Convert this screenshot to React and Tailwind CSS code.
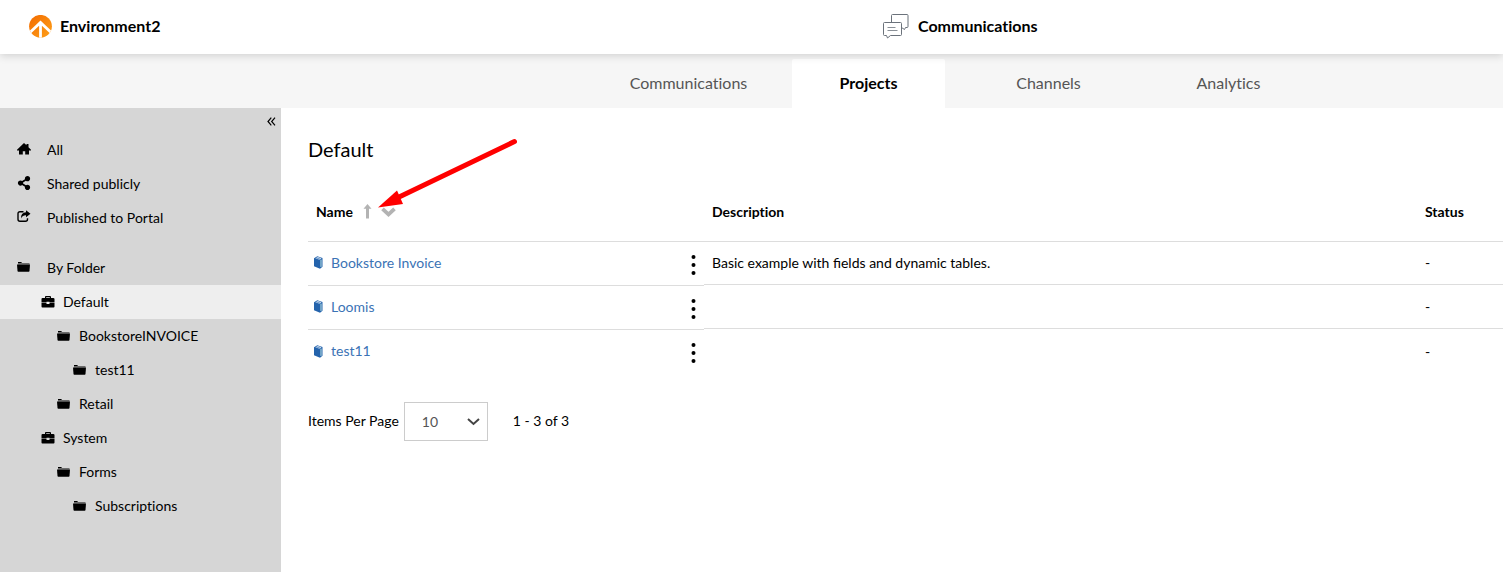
import { useState } from "react";
import { FaShareAlt } from "react-icons/fa";

function HomeIcon() {
    return (
        <svg width="14" height="12" viewBox="0 0 14 12" fill="black" aria-hidden="true">
            <path d="M7 0L9.500 2.300V1h2v3.200L14 6.800v.7h-2V11.500H8.200V8.200H5.800V11.500H2V7.500H0V6.800z" />
        </svg>
    );
}

function ShareIcon() {
    return (
        <svg width="14" height="13" viewBox="0 0 14 13" aria-hidden="true">
            <path d="M6.500 1.700H3Q1 1.700 1 3.700V9.300q0 2 2 2h5.500q2 0 2-2V8.300" fill="none" stroke="black" strokeWidth="1.400" />
            <path d="M9 0.300L13.500 3.800 9 7.300V5.300Q5.800 5.100 4 8.500 3.800 2.600 9 2.300z" />
        </svg>
    );
}

function FolderIcon() {
    return (
        <svg width="13" height="10" viewBox="0 0 13 10" fill="black" aria-hidden="true">
            <path d="M1 1h11.500v1.500H1z" opacity="0.5" />
            <path d="M1 0h3.400l.4 1H1z" />
            <path d="M0 2.400h13L12.500 9.100q-.1.700-.7.700H1.200q-.6 0-.7-.7z" />
        </svg>
    );
}

function CaseIcon() {
    return (
        <svg width="14" height="12" viewBox="0 0 14 12" fill="black" aria-hidden="true">
            <path fillRule="evenodd" d="M4 2V1q0-.9.9-.9h4.200q.9 0 .9.9v1h2.200Q13.500 2 13.500 3v3.500H8.500v-.7h-3v.7H.5V3q0-1 1-1zM5.200 2h3.600v-.8H5.200z" />
            <path d="M.5 7h5v.9h3V7h5v3.600q0 .9-.9.900H1.400q-.9 0-.9-.9z" />
        </svg>
    );
}

function BookIcon() {
    return (
        <svg width="9" height="13" viewBox="0 0 9 13" aria-hidden="true">
            <path d="M0 2.200L3.300.3 8.500 2V10.700L6 12.700 0 10.200z" fill="#2463ac" />
            <path d="M1.300 2.300L3.600 1l3.900 1.300L5.500 3.800z" fill="#dce9f6" />
            <path d="M2.200 1.800L6.300 3.200" stroke="#2463ac" strokeWidth="0.600" />
            <path d="M7 3.600v7.300" stroke="#bfe6e4" strokeWidth="1" />
        </svg>
    );
}

function LogoIcon() {
    return (
        <svg width="23" height="23" viewBox="0 0 23 23" aria-hidden="true">
            <defs>
                <linearGradient id="logo-fill" x1="0" y1="0" x2="1" y2="1">
                    <stop offset="0" stopColor="#f26a00" />
                    <stop offset="1" stopColor="#ffa21a" />
                </linearGradient>
                <clipPath id="logo-clip">
                    <circle cx="11.500" cy="11.300" r="11.400" />
                </clipPath>
            </defs>
            <g clipPath="url(#logo-clip)">
                <rect width="23" height="23" fill="url(#logo-fill)" />
                <path d="M1.200 17.200L11.500 7.500l10.300 9.700M11.500 8v15" fill="none" stroke="white" strokeWidth="2.800" />
            </g>
        </svg>
    );
}

function ChatIcon() {
    return (
        <svg width="26" height="25" viewBox="0 0 26 25" fill="none" stroke="#6b727b" strokeWidth="1" aria-hidden="true">
            <path d="M8.500 8V1.500q0-1 1-1H24q1 0 1 1V12.500q0 1-1 1H22.500L21.500 15.500L18.500 13.500" />
            <path d="M1.500 8.500H17.500q1 0 1 1V20.500q0 1-1 1H7.500L4.500 24L3.500 21.500H1.500q-1 0-1-1V9.500q0-1 1-1z" />
            <path d="M4.500 13.500h8M4.500 16.500h10" stroke="#8a9097" />
        </svg>
    );
}

const shortcuts = [
    { label: "All", icon: <HomeIcon /> },
    { label: "Shared publicly", icon: <FaShareAlt size={14} /> },
    { label: "Published to Portal", icon: <ShareIcon /> },
];

const folders = [
    { label: "Default", icon: <CaseIcon />, indent: "pl-10", active: true },
    { label: "BookstoreINVOICE", icon: <FolderIcon />, indent: "pl-14" },
    { label: "test11", icon: <FolderIcon />, indent: "pl-18" },
    { label: "Retail", icon: <FolderIcon />, indent: "pl-14" },
    { label: "System", icon: <CaseIcon />, indent: "pl-10" },
    { label: "Forms", icon: <FolderIcon />, indent: "pl-14" },
    { label: "Subscriptions", icon: <FolderIcon />, indent: "pl-18" },
];

const tabs = ["Communications", "Projects", "Channels", "Analytics"];

const projects = [
    { name: "Bookstore Invoice", description: "Basic example with fields and dynamic tables.", status: "-" },
    { name: "Loomis", description: "", status: "-" },
    { name: "test11", description: "", status: "-" },
];

function Sidebar() {
    return (
        <aside className="w-[281px] shrink-0 bg-[#d6d6d6]">
            <div className="h-[25px] flex justify-end pr-1">
                <button aria-label="Collapse" className="flex items-center px-px pt-px">
                    <svg width="9" height="9" viewBox="0 0 9 9" fill="none" stroke="black" strokeWidth="1.200" aria-hidden="true">
                        <path d="M4.300.700L1 4.500l3.300 3.800M8 .700L4.700 4.500 8 8.300" />
                    </svg>
                </button>
            </div>
            <nav>
                {shortcuts.map(item => (
                    <a key={item.label} href="#" className="h-[34px] flex items-center pl-4">
                        <span className="w-[31px] pl-px pb-[3px]">{item.icon}</span>
                        {item.label}
                    </a>
                ))}
                <a href="#" className="h-[34px] flex items-center pl-4 mt-4">
                    <span className="w-[31px] pl-px pb-[3px]"><FolderIcon /></span>
                    By Folder
                </a>
                {folders.map(item => (
                    <a
                        key={item.label}
                        href="#"
                        className={`h-[34px] flex items-center ${item.indent} ${item.active ? "bg-[#eee]" : ""}`}
                    >
                        <span className="w-[23px] pl-px">{item.icon}</span>
                        {item.label}
                    </a>
                ))}
            </nav>
        </aside>
    );
}

function ProjectTable() {
    return (
        <table className="w-full table-fixed border-separate border-spacing-0 text-left">
            <colgroup>
                <col className="w-[396px]" />
                <col />
                <col className="w-[86px]" />
            </colgroup>
            <thead>
                <tr className="h-[60px]">
                    <th className="border-b border-[#ddd] pl-2 font-bold">
                        <div className="flex items-center">
                            Name
                            <button aria-label="Sort by name" className="ml-[10px]">
                                <svg width="9" height="15" viewBox="0 0 9 15" fill="#b3b3b3" aria-hidden="true">
                                    <path d="M4.500 0L8.500 4.800H6V14.500H3V4.800H.500z" />
                                </svg>
                            </button>
                            <button aria-label="Column options" className="ml-[9px]">
                                <svg width="15" height="10" viewBox="0 0 15 10" fill="none" stroke="#b3b3b3" strokeWidth="3.800" aria-hidden="true">
                                    <path d="M1.500 1.800l6 5.500 6-5.500" />
                                </svg>
                            </button>
                        </div>
                    </th>
                    <th className="border-b border-[#ddd] pl-2 font-bold">Description</th>
                    <th className="border-b border-[#ddd] pl-2 font-bold">Status</th>
                </tr>
            </thead>
            <tbody>
                {projects.map((project, i) => {
                    const line = i < projects.length - 1 ? "border-b border-[#ddd]" : "";
                    return (
                        <tr key={project.name} className="align-top">
                            <td className="p-0">
                                <div className={`h-[44px] flex items-center justify-between pl-[6px] pr-2 pb-[2px] ${line}`}>
                                    <a href="#" className="flex items-center gap-2 text-[#3b73b5]">
                                        <BookIcon />
                                        {project.name}
                                    </a>
                                    <button aria-label={`Actions for ${project.name}`} className="pt-1">
                                        <svg width="5" height="20" viewBox="0 0 5 20" aria-hidden="true">
                                            <circle cx="2.500" cy="2" r="2" />
                                            <circle cx="2.500" cy="10" r="2" />
                                            <circle cx="2.500" cy="18" r="2" />
                                        </svg>
                                    </button>
                                </div>
                            </td>
                            <td className="p-0">
                                <div className={`h-[43px] flex items-center pl-2 [font-variant-ligatures:normal] ${line}`}>{project.description}</div>
                            </td>
                            <td className="p-0">
                                <div className={`h-[43px] flex items-center pl-2 ${line}`}>{project.status}</div>
                            </td>
                        </tr>
                    );
                })}
            </tbody>
        </table>
    );
}

export default function App() {
    const [perPage, setPerPage] = useState("10");

    return (
        <div className="min-h-screen flex flex-col bg-white text-black text-sm font-[Lato,sans-serif] [font-variant-ligatures:none]">
            <header className="relative z-10 h-[54px] flex items-center bg-white pl-[29px] text-base font-bold shadow-[0_2px_8px_rgba(0,0,0,0.15)]">
                <div className="w-[854px] flex items-center gap-2 pb-[2px]">
                    <LogoIcon />
                    <span>Environment2</span>
                </div>
                <div className="flex items-center gap-[9px] pb-[2px]">
                    <ChatIcon />
                    <h1>Communications</h1>
                </div>
            </header>

            <nav className="h-[54px] flex gap-[27px] bg-[#f6f6f6] pl-[612px] pt-[5px] text-base">
                {tabs.map(tab => (
                    <a
                        key={tab}
                        href="#"
                        className={`w-[153px] flex items-center justify-center pb-[2px] ${tab === "Projects" ? "bg-white font-bold rounded-t-xs" : "text-[#555]"}`}
                    >
                        {tab}
                    </a>
                ))}
            </nav>

            <div className="flex flex-1">
                <Sidebar />
                <main className="relative flex-1 min-w-0 pl-[27px] pt-[27px]">
                    <h2 className="text-xl">Default</h2>
                    <div className="mt-[19px]">
                        <ProjectTable />
                    </div>
                    <div className="flex items-center mt-7">
                        <label htmlFor="per-page" className="pb-[2px]">Items Per Page</label>
                        <div className="relative ml-[5px]">
                            <select
                                id="per-page"
                                value={perPage}
                                onChange={e => setPerPage(e.target.value)}
                                className="w-[84px] h-[39px] appearance-none border border-[#ccc] bg-white pl-[17px] text-[#555]"
                            >
                                <option>10</option>
                                <option>25</option>
                                <option>50</option>
                            </select>
                            <svg className="absolute right-2 top-4 pointer-events-none" width="13" height="8" viewBox="0 0 13 8" fill="none" stroke="#444" strokeWidth="2" aria-hidden="true">
                                <path d="M1 1l5.500 5L12 1" />
                            </svg>
                        </div>
                        <span className="ml-[25px] pb-[2px]">1 - 3 of 3</span>
                    </div>
                    <svg className="absolute left-[96px] top-[30px] pointer-events-none" width="142" height="72" viewBox="0 0 142 72" aria-hidden="true">
                        <path d="M137.500 3.500L20 60" stroke="#f00" strokeWidth="5" strokeLinecap="round" />
                        <path d="M1 69.500L20 52.500l6 13.500z" fill="#f00" />
                    </svg>
                </main>
            </div>
        </div>
    );
}
